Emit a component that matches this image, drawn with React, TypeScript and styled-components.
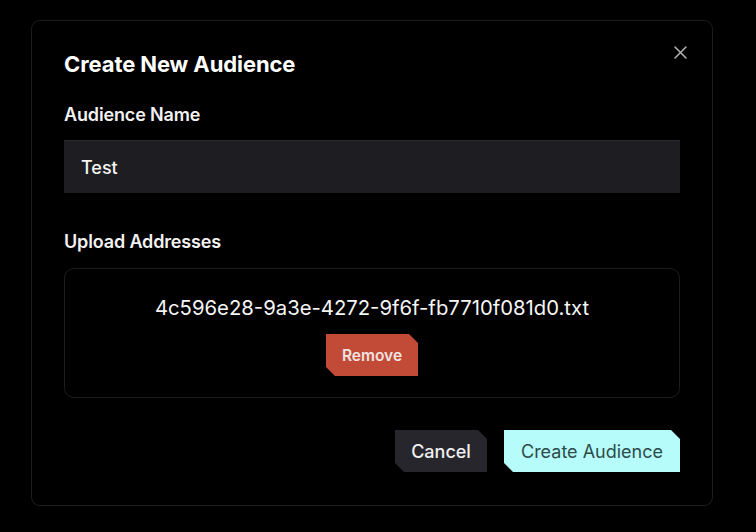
import React from "react";
import styled, { createGlobalStyle } from "styled-components";

const Global = createGlobalStyle`
  html, body { margin: 0; padding: 0; background: #000; }
  body { font-family: Inter, "Noto Sans", sans-serif; color: #fff; }
  * { box-sizing: border-box; }
`;

const Page = styled.div`
  width: 756px;
  height: 532px;
  padding: 20px 0 0 31px;
  background: #000;
`;

const Dialog = styled.div`
  position: relative;
  width: 682px;
  height: 486px;
  border: 1px solid #1c1c1e;
  border-radius: 9px;
  background: #000;
  padding: 29px 32px 33px 32px;
  display: flex;
  flex-direction: column;
`;

const Title = styled.h2`
  margin: 0;
  font-size: 22px;
  line-height: 28px;
  font-weight: 700;
  letter-spacing: -0.1px;
  color: #fff;
`;

const Close = styled.button`
  position: absolute;
  top: 21px;
  right: 22px;
  width: 20px;
  height: 20px;
  padding: 0;
  border: none;
  background: transparent;
  display: flex;
  align-items: center;
  justify-content: center;
  cursor: pointer;
`;

const Label = styled.div<{ $top: number }>`
  margin-top: ${(p) => p.$top}px;
  font-size: 18px;
  line-height: 24px;
  font-weight: 600;
  letter-spacing: -0.15px;
  color: #f2f2f2;
`;

const Input = styled.div`
  margin-top: 13px;
  height: 53px;
  background: #1e1e22;
  border-top: 1px solid #26262b;
  display: flex;
  align-items: center;
  padding: 0 17px;
  font-size: 18px;
  font-weight: 500;
  color: #f4f4f4;
`;

const UploadBox = styled.div`
  margin-top: 14px;
  height: 130px;
  border: 1px solid #1c1c1e;
  border-radius: 10px;
  display: flex;
  flex-direction: column;
  align-items: center;
  padding-top: 26px;
  gap: 13px;
`;

const FileName = styled.div`
  font-size: 20.3px;
  line-height: 26px;
  font-weight: 400;
  color: #f6f6f6;
`;

const CutButton = styled.button<{ $bg: string; $fg: string; $w: number; $h: number; $size: number; $weight: number }>`
  width: ${(p) => p.$w}px;
  height: ${(p) => p.$h}px;
  border: none;
  padding: 0;
  background: ${(p) => p.$bg};
  color: ${(p) => p.$fg};
  font-family: Inter, "Noto Sans", sans-serif;
  font-size: ${(p) => p.$size}px;
  font-weight: ${(p) => p.$weight};
  clip-path: polygon(0 0, calc(100% - 9px) 0, 100% 9px, 100% 100%, 9px 100%, 0 calc(100% - 9px));
  cursor: pointer;
  display: flex;
  align-items: center;
  justify-content: center;
`;

const Footer = styled.div`
  margin-top: auto;
  display: flex;
  justify-content: flex-end;
  gap: 17px;
`;

export default function App() {
  return (
    <>
      <Global />
      <Page>
        <Dialog>
          <Close aria-label="Close">
            <svg width="13" height="13" viewBox="0 0 13 13" fill="none">
              <path d="M1 1L12 12M12 1L1 12" stroke="#b4b4b4" strokeWidth="1.5" strokeLinecap="round" />
            </svg>
          </Close>
          <Title>Create New Audience</Title>
          <Label $top={25}>Audience Name</Label>
          <Input>Test</Input>
          <Label $top={37}>Upload Addresses</Label>
          <UploadBox>
            <FileName>4c596e28-9a3e-4272-9f6f-fb7710f081d0.txt</FileName>
            <CutButton $bg="#c24b38" $fg="#f1e4e1" $w={92} $h={42} $size={15.5} $weight={600}>
              Remove
            </CutButton>
          </UploadBox>
          <Footer>
            <CutButton $bg="#27262d" $fg="#f0f0f0" $w={92} $h={42} $size={18} $weight={500}>
              Cancel
            </CutButton>
            <CutButton $bg="#b5fcfb" $fg="#2e4b4a" $w={176} $h={42} $size={18} $weight={400}>
              Create Audience
            </CutButton>
          </Footer>
        </Dialog>
      </Page>
    </>
  );
}
